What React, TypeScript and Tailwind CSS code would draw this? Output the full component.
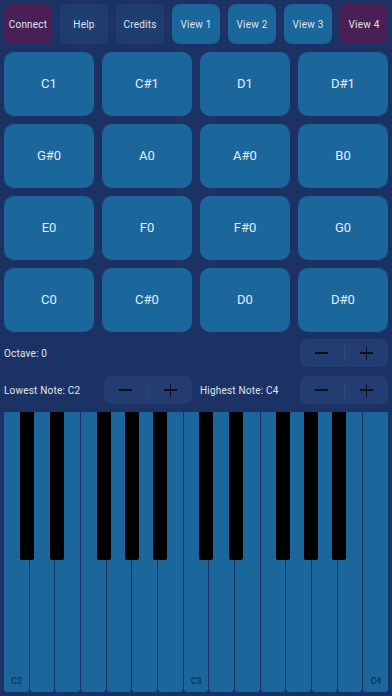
import * as React from "react";

const topButtons = [
  { label: "Connect", tone: "bg-[#4a1f56]" },
  { label: "Help", tone: "bg-[#1f3d6f]" },
  { label: "Credits", tone: "bg-[#1f3d6f]" },
  { label: "View 1", tone: "bg-[#1b679b]" },
  { label: "View 2", tone: "bg-[#1b679b]" },
  { label: "View 3", tone: "bg-[#1b679b]" },
  { label: "View 4", tone: "bg-[#4a1f56]" },
];

const pads = [
  ["C1", "C#1", "D1", "D#1"],
  ["G#0", "A0", "A#0", "B0"],
  ["E0", "F0", "F#0", "G0"],
  ["C0", "C#0", "D0", "D#0"],
];

// left edge of each black key, in px from keyboard's left
const blackKeys = [16, 46, 93, 121, 149, 195, 225, 272, 300, 328];

const whiteLabels: Record<number, string> = { 0: "C2", 7: "C3", 14: "C4" };

function Stepper() {
  return (
    <div className="flex h-7 w-[88px] items-center rounded-lg bg-[#233d72]">
      <div className="flex flex-1 items-center justify-center">
        <div className="h-[1.5px] w-[13px] bg-[#0b0f1a]" />
      </div>
      <div className="h-4 w-px bg-[#2f4a80]" />
      <div className="relative flex flex-1 items-center justify-center">
        <div className="h-[1.5px] w-[13px] bg-[#0b0f1a]" />
        <div className="absolute h-[13px] w-[1.5px] bg-[#0b0f1a]" />
      </div>
    </div>
  );
}

export default function App() {
  return (
    <div
      className="flex h-[696px] w-[392px] flex-col bg-[#1c3264] p-1 text-[#dfe6f2]"
      style={{ fontFamily: "Roboto, 'Liberation Sans', sans-serif" }}
    >
      <div className="flex h-10 gap-2">
        {topButtons.map((b) => (
          <div
            key={b.label}
            className={`flex flex-1 items-center justify-center rounded-lg text-[10px] tracking-[0.2px] ${b.tone}`}
          >
            {b.label}
          </div>
        ))}
      </div>

      <div className="mt-2 grid grid-cols-4 gap-2">
        {pads.flat().map((p) => (
          <div
            key={p}
            className="flex h-16 items-center justify-center rounded-[10px] bg-[#1b679b] text-[13px] text-[#e6eefa]"
          >
            {p}
          </div>
        ))}
      </div>

      <div className="mt-[7px] flex h-7 items-center justify-between">
        <span className="text-[10px] tracking-[0.2px]">Octave: 0</span>
        <Stepper />
      </div>

      <div className="mt-[9px] flex h-7 gap-2">
        <div className="flex flex-1 items-center justify-between">
          <span className="text-[10px] tracking-[0.2px]">Lowest Note: C2</span>
          <Stepper />
        </div>
        <div className="flex flex-1 items-center justify-between">
          <span className="text-[10px] tracking-[0.2px]">Highest Note: C4</span>
          <Stepper />
        </div>
      </div>

      <div className="relative mt-2 flex flex-1 gap-px">
        {Array.from({ length: 15 }).map((_, i) => (
          <div
            key={i}
            className="relative flex flex-1 items-end rounded-b-[3px] bg-[#1b679b] pb-[4px] pl-[7px]"
          >
            {whiteLabels[i] && (
              <span className="text-[9px] font-bold text-[#16356a]">{whiteLabels[i]}</span>
            )}
          </div>
        ))}
        {blackKeys.map((x) => (
          <div
            key={x}
            className="absolute top-0 h-[148px] w-[14px] rounded-b-[2px] bg-black"
            style={{ left: x }}
          />
        ))}
      </div>
    </div>
  );
}
